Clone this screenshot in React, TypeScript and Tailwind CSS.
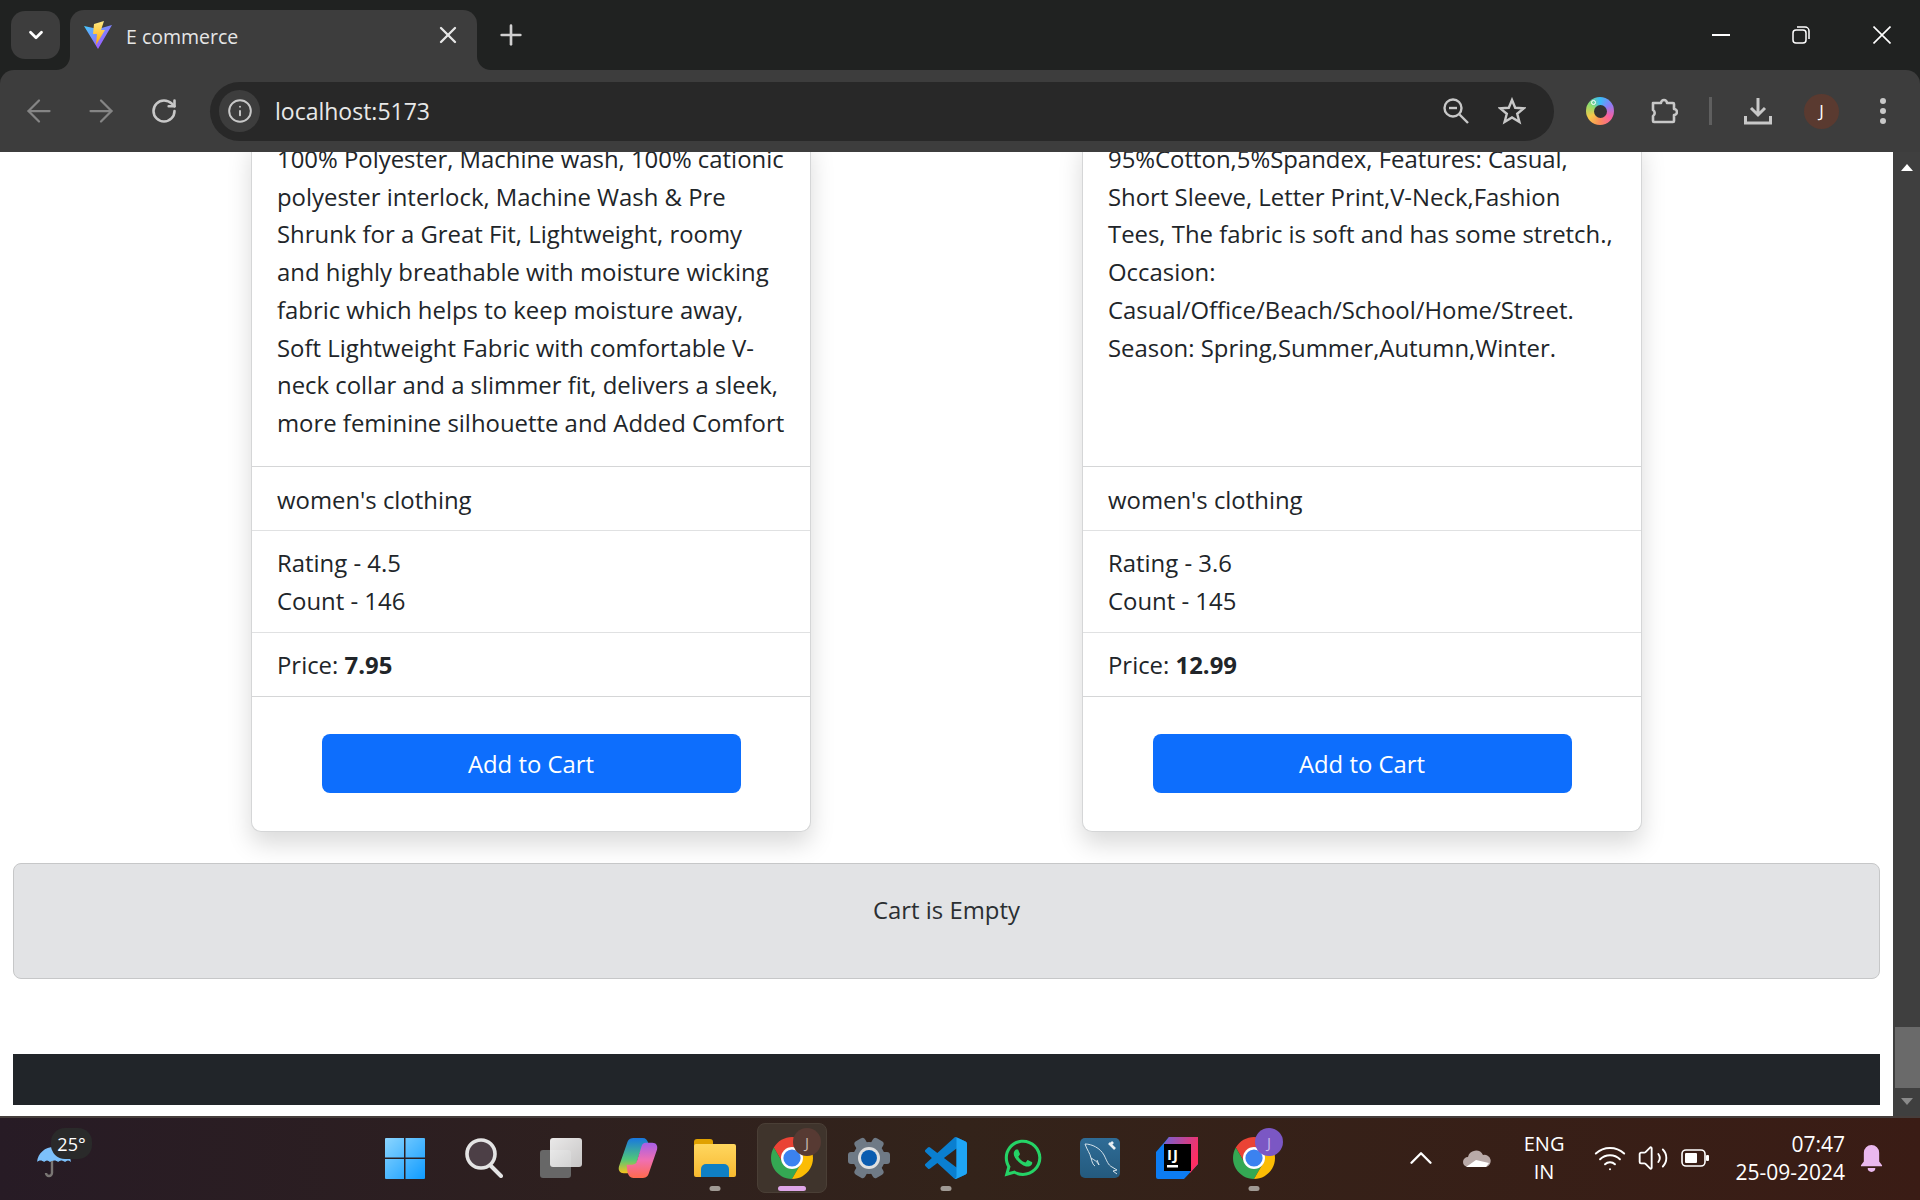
import { ArrowLeft, ArrowRight, ChevronDown, ChevronUp, Info, Plus, RotateCw, Volume2, Wifi, X } from "lucide-react";
import { FaWhatsapp } from "react-icons/fa";

const UI_FONT = "font-['Open_Sans','Noto_Sans',sans-serif]";

function ViteLogo() {
  return (
    <svg width="28" height="28" viewBox="0 0 28 28" className="flex-none">
      <defs>
        <linearGradient id="vite-a" x1="0" y1="0" x2="1" y2="1">
          <stop offset="0" stopColor="#41d1ff" />
          <stop offset="1" stopColor="#bd34fe" />
        </linearGradient>
        <linearGradient id="vite-b" x1="0" y1="0" x2="0" y2="1">
          <stop offset="0" stopColor="#ffea83" />
          <stop offset="1" stopColor="#ffa800" />
        </linearGradient>
      </defs>
      <path d="M0 5 L14 8 L28 4 L14 28 Z" fill="url(#vite-a)" />
      <path d="M10 3 L20 0 L17 9 L21 9 L12 24 L13 13 L9 13 Z" fill="url(#vite-b)" />
    </svg>
  );
}

function ChromeIcon() {
  return (
    <svg width="42" height="42" viewBox="4 4 40 40">
      <path d="M6.680 14A20 20 0 0 1 41.320 14H24A10 10 0 0 0 15.340 29Z" fill="#ea4335" />
      <path d="M24 44A20 20 0 0 1 6.680 14L15.340 29A10 10 0 0 0 32.660 29Z" fill="#34a853" />
      <path d="M41.320 14A20 20 0 0 1 24 44L32.660 29A10 10 0 0 0 24 14Z" fill="#fbbc04" />
      <circle cx="24" cy="24" r="10.500" fill="#fff" />
      <circle cx="24" cy="24" r="8.200" fill="#3b82f0" />
    </svg>
  );
}

function ProfileBubble({ color, text }: { color: string; text: string }) {
  return (
    <span className={`absolute -top-[9px] left-[22px] flex h-[28px] w-[28px] items-center justify-center rounded-full text-[15px] ${color} ${text} ${UI_FONT}`}>
      J
    </span>
  );
}

function TabStrip() {
  return (
    <div className="flex h-[70px] flex-none items-end bg-[#202221] pl-[11px] text-white">
      <div className="mb-[11px] flex h-[48px] w-[49px] items-center justify-center rounded-[14px] bg-[#3d3d3d]">
        <ChevronDown size={22} strokeWidth={3} />
      </div>
      <div className="relative ml-[10px] flex h-[60px] w-[407px] items-start rounded-t-[14px] bg-[#3d3d3d] pt-[11px] pl-[14px]">
        <ViteLogo />
        <span className={`ml-[14px] mt-[1px] text-[19.5px] text-[#e6e6e6] ${UI_FONT}`}>E commerce</span>
        <X size={28} strokeWidth={2} className="ml-auto mr-[15px] text-[#e6e6e6]" />
        <span className="absolute bottom-0 -right-[14px] h-[14px] w-[14px] bg-[#3d3d3d]">
          <span className="block h-full w-full rounded-bl-[14px] bg-[#202221]" />
        </span>
        <span className="absolute bottom-0 -left-[14px] h-[14px] w-[14px] bg-[#3d3d3d]">
          <span className="block h-full w-full rounded-br-[14px] bg-[#202221]" />
        </span>
      </div>
      <Plus size={32} strokeWidth={2} className="mb-[19px] ml-[18px] text-[#d0d0d0]" />
      <div className="mb-[26px] ml-auto flex items-center">
        <span className="mr-[62px] h-[2px] w-[18px] bg-white" />
        <svg width="18" height="18" viewBox="0 0 18 18" fill="none" stroke="#fff" strokeWidth="1.500" className="mr-[63px]">
          <rect x="1" y="4" width="13" height="13" rx="3" />
          <path d="M5 1h8a4 4 0 0 1 4 4v8" />
        </svg>
        <svg width="18" height="18" viewBox="0 0 18 18" stroke="#fff" strokeWidth="1.600" className="mr-[29px]">
          <path d="M0.500 0.500l17 17M17.500 0.500l-17 17" />
        </svg>
      </div>
    </div>
  );
}

function Toolbar() {
  return (
    <div className="flex h-[82px] flex-none items-center rounded-t-[14px] bg-[#3d3d3d] pl-[21px] text-[#c8c8c8]">
      <ArrowLeft size={36} strokeWidth={1.5} className="flex-none text-[#858585]" />
      <ArrowRight size={36} strokeWidth={1.5} className="ml-[26px] flex-none text-[#858585]" />
      <RotateCw size={28} strokeWidth={2.2} className="ml-[31px] flex-none" />
      <div className="ml-[32px] flex h-[59px] w-[1344px] flex-none items-center rounded-full bg-[#282828] pl-[9px]">
        <span className="flex h-[42px] w-[41px] flex-none items-center justify-center rounded-full bg-[#3d3d3d]">
          <Info size={26} strokeWidth={1.8} />
        </span>
        <span className={`ml-[15px] text-[23px] text-[#e8e8e8] ${UI_FONT}`}>localhost:5173</span>
        <svg width="26" height="26" viewBox="0 0 26 26" fill="none" stroke="#c8c8c8" strokeWidth="2.400" className="ml-auto">
          <circle cx="10" cy="10" r="8.500" />
          <path d="M16.500 16.500L25 25" />
          <path d="M6 10h8" />
        </svg>
        <svg width="28" height="28" viewBox="0 0 28 28" fill="none" stroke="#c8c8c8" strokeWidth="2.400" className="ml-[29px] mr-[28px]">
          <polygon points="14,3 17.200,10.800 25.800,11.300 19.200,16.800 21.400,25 14,20.500 6.600,25 8.800,16.800 2.200,11.300 10.800,10.800" />
        </svg>
      </div>
      <span className="relative ml-[32px] flex h-[28px] w-[28px] flex-none items-center justify-center rounded-full bg-[conic-gradient(#38bdf8,#8b7cf6,#f95fa0,#fb8a5a,#f6c84a,#8fdc6a,#38bdf8)]">
        <span className="h-[13px] w-[13px] rounded-full bg-[#333333]" />
        <span className="absolute left-[5px] top-[3px] h-[5px] w-[5px] rounded-full border border-white" />
      </span>
      <svg width="28" height="28" viewBox="0 0 28 28" fill="none" stroke="#c8c8c8" strokeWidth="2.600" className="ml-[36px] flex-none">
        <path d="M3 6h8a3 3 0 0 1 6 0h6a1 1 0 0 1 1 1v5a3 3 0 0 1 0 6v6a1 1 0 0 1-1 1H4a1 1 0 0 1-1-1v-5a3.500 3.500 0 0 0 0-6z" strokeLinejoin="round" />
      </svg>
      <span className="ml-[31px] h-[28px] w-[3px] flex-none bg-[#5f5f5f]" />
      <svg width="28" height="28" viewBox="0 0 28 28" fill="none" stroke="#c8c8c8" strokeWidth="3" className="ml-[32px] flex-none">
        <path d="M14 1v17M7 11l7 7 7-7M1.500 19v7h25v-7" />
      </svg>
      <span className={`ml-[32px] flex h-[35px] w-[35px] flex-none items-center justify-center rounded-full bg-[#5a3a30] text-[17px] text-white ${UI_FONT}`}>J</span>
      <span className="ml-[41px] flex flex-none flex-col gap-[4px]">
        <i className="h-[6px] w-[6px] rounded-full bg-[#c8c8c8]" />
        <i className="h-[6px] w-[6px] rounded-full bg-[#c8c8c8]" />
        <i className="h-[6px] w-[6px] rounded-full bg-[#c8c8c8]" />
      </span>
    </div>
  );
}

type Product = {
  lines: string[];
  rating: string;
  count: string;
  price: string;
};

const products: Product[] = [
  {
    lines: [
      "100% Polyester, Machine wash, 100% cationic",
      "polyester interlock, Machine Wash & Pre",
      "Shrunk for a Great Fit, Lightweight, roomy",
      "and highly breathable with moisture wicking",
      "fabric which helps to keep moisture away,",
      "Soft Lightweight Fabric with comfortable V-",
      "neck collar and a slimmer fit, delivers a sleek,",
      "more feminine silhouette and Added Comfort",
    ],
    rating: "4.5",
    count: "146",
    price: "7.95",
  },
  {
    lines: [
      "95%Cotton,5%Spandex, Features: Casual,",
      "Short Sleeve, Letter Print,V-Neck,Fashion",
      "Tees, The fabric is soft and has some stretch.,",
      "Occasion:",
      "Casual/Office/Beach/School/Home/Street.",
      "Season: Spring,Summer,Autumn,Winter.",
    ],
    rating: "3.6",
    count: "145",
    price: "12.99",
  },
];

function ProductCard({ product }: { product: Product }) {
  return (
    <div className="w-[560px] flex-none rounded-b-[10px] border border-t-0 border-[#d5d6d7] bg-white shadow-[0_12px_25px_rgba(0,0,0,0.15)]">
      <div className="h-[327px] px-[25px] pt-[1px]">
        {product.lines.map((line) => (
          <div key={line} className="whitespace-nowrap">{line}</div>
        ))}
      </div>
      <div className="h-[64px] border-t border-[#d5d6d7] px-[25px] pt-[14px]">women's clothing</div>
      <div className="h-[102px] border-t border-[#e0e1e2] px-[25px] pt-[13px]">
        <div>Rating - {product.rating}</div>
        <div>Count - {product.count}</div>
      </div>
      <div className="h-[64px] border-t border-[#e0e1e2] px-[25px] pt-[13px]">
        Price: <b>{product.price}</b>
      </div>
      <div className="flex h-[135px] justify-center border-t border-[#d5d6d7] pt-[37px]">
        <button className="h-[59px] w-[419px] rounded-[8px] bg-[#0d6efd] text-white">Add to Cart</button>
      </div>
    </div>
  );
}

function PageContent() {
  return (
    <div className={`flex min-w-0 flex-1 flex-col overflow-hidden bg-white px-[13px] text-[23.9px] leading-[37.7px] text-[#212529] ${UI_FONT}`}>
      <div className="-mt-[13px] flex flex-none gap-[271px] pl-[238px]">
        {products.map((product) => (
          <ProductCard key={product.price} product={product} />
        ))}
      </div>
      <div className="mt-[31px] h-[116px] flex-none rounded-[8px] border border-[#c6c7c8] bg-[#e2e3e5] pt-[27px] text-center text-[#2b2f32]">
        Cart is Empty
      </div>
      <div className="mt-[75px] h-[51px] flex-none bg-[#212529]" />
    </div>
  );
}

function Scrollbar() {
  return (
    <div className="flex w-[27px] flex-none flex-col items-center bg-[#3f3f3f]">
      <span className="mt-[12px] h-0 w-0 border-x-[6px] border-b-[7px] border-x-transparent border-b-white" />
      <span className="mt-[856px] ml-[2px] h-[61px] w-[25px] flex-none bg-[#6a6a6a]" />
      <span className="mt-[10px] h-0 w-0 border-x-[6px] border-t-[7px] border-x-transparent border-t-[#8a8a8a]" />
    </div>
  );
}

function Dot() {
  return <span className="absolute -bottom-[12px] left-1/2 h-[5px] w-[11px] -translate-x-1/2 rounded-full bg-[#a09a94]" />;
}

function Gear() {
  return (
    <svg width="42" height="42" viewBox="0 0 42 42" className="ml-[21px] flex-none">
      <circle cx="21" cy="21" r="16" fill="#6f7a86" />
      {[0, 60, 120, 180, 240, 300].map((angle) => (
        <rect key={angle} x="15" y="0" width="12" height="10" rx="3" fill="#6f7a86" transform={`rotate(${angle + 30} 21 21)`} />
      ))}
      <circle cx="21" cy="21" r="11" fill="#e0e0e0" />
      <circle cx="21" cy="21" r="8" fill="#0a5cb0" />
    </svg>
  );
}

function Taskbar() {
  return (
    <div className="flex h-[84px] flex-none items-center border-t-2 border-[#463e3c] bg-gradient-to-r from-[#271b25] via-[#33231a] to-[#3a1c15] pb-[2px] text-white">
      <div className={`relative -mt-[10px] ml-[37px] h-[50px] w-[55px] flex-none ${UI_FONT}`}>
        <svg width="34" height="31" viewBox="0 0 34 31" className="absolute bottom-0 left-0">
          <path d="M0 15C1 6 8 0 17 0s16 6 17 15c-2-2-4-2-6 0-3-2-5-2-7 0-2-2-5-2-8 0-2-2-4-2-6 0-2-2-5-2-7 0z" fill="#7cc0fb" />
          <path d="M15 14v12a3 3 0 0 1-6 0" fill="none" stroke="#7a7674" strokeWidth="2.400" />
        </svg>
        <span className="absolute right-0 top-0 flex h-[31px] w-[41px] items-center justify-center rounded-[14px] bg-[#2a2a2a] text-[18px] leading-none">25°</span>
      </div>

      <svg width="40" height="41" viewBox="0 0 40 41" className="ml-[293px] flex-none">
        <defs>
          <linearGradient id="win" x1="0" y1="0" x2="1" y2="1">
            <stop offset="0" stopColor="#8bd5ff" />
            <stop offset="1" stopColor="#0f9bff" />
          </linearGradient>
        </defs>
        <path d="M0 1a1 1 0 0 1 1-1h18v19.500H0zM20.500 0H39a1 1 0 0 1 1 1v18.500H20.500zM0 21h19v20H1a1 1 0 0 1-1-1zM20.500 21H40v19a1 1 0 0 1-1 1H20.500z" fill="url(#win)" />
      </svg>
      <svg width="38" height="40" viewBox="0 0 38 40" fill="none" className="ml-[40px] flex-none">
        <circle cx="16" cy="16" r="14" fill="#4c3f46" stroke="#e4e4e4" strokeWidth="3.600" />
        <path d="M26 28l10 10" stroke="#e4e4e4" strokeWidth="4" strokeLinecap="round" />
      </svg>
      <div className="relative ml-[37px] h-[40px] w-[42px] flex-none">
        <span className="absolute bottom-0 left-0 h-[28px] w-[31px] rounded-[3px] bg-[#676767]" />
        <span className="absolute right-0 top-0 h-[29px] w-[32px] rounded-[3px] bg-gradient-to-br from-white to-[#d8d8d8] opacity-90" />
      </div>
      <svg width="42" height="40" viewBox="0 0 42 42" className="ml-[35px] flex-none">
        <defs>
          <linearGradient id="cop-a" x1="0" y1="0" x2="0" y2="1">
            <stop offset="0" stopColor="#1877e0" />
            <stop offset="0.6" stopColor="#4fc67a" />
            <stop offset="1" stopColor="#f6c21d" />
          </linearGradient>
          <linearGradient id="cop-b" x1="0" y1="0" x2="0" y2="1">
            <stop offset="0" stopColor="#ff6a4d" />
            <stop offset="0.5" stopColor="#f06fb0" />
            <stop offset="1" stopColor="#a65fe8" />
          </linearGradient>
        </defs>
        <path d="M10 4C11 1 14 0 16 0H26C29 0 31 2 32 6L33 14H27C24 14 23 15 22 18L17 34C16 36 15 37 13 37H6C2 37 0 34 1 30Z" fill="url(#cop-a)" />
        <path d="M10 4C11 1 14 0 16 0H26C29 0 31 2 32 6L33 14H27C24 14 23 15 22 18L17 34C16 36 15 37 13 37H6C2 37 0 34 1 30Z" fill="url(#cop-b)" transform="rotate(180 21 21)" />
      </svg>
      <div className="relative ml-[35px] h-[42px] w-[42px] flex-none">
        <span className="absolute left-0 top-[2px] h-[12px] w-[19px] rounded-t-[3px] bg-[#e0a100]" />
        <span className="absolute bottom-[2px] left-0 h-[33px] w-full rounded-[2px] bg-gradient-to-b from-[#ffd75e] to-[#f7b92d]" />
        <span className="absolute bottom-[2px] left-[7px] h-[13px] w-[28px] rounded-t-[5px] bg-[#0f7fc4]" />
        <Dot />
      </div>
      <div className="relative ml-[21px] flex h-[70px] w-[70px] flex-none items-center justify-center rounded-[8px] border border-[#4a3f36] bg-[#3f342c]">
        <div className="relative h-[42px] w-[42px]">
          <ChromeIcon />
          <ProfileBubble color="bg-[#573a33]" text="text-[#c7b6ae]" />
        </div>
        <span className="absolute bottom-[1px] h-[5px] w-[28px] rounded-full bg-[#dea6e8]" />
      </div>
      <Gear />
      <div className="relative ml-[35px] h-[42px] w-[42px] flex-none">
        <svg width="42" height="42" viewBox="0 0 100 100">
          <path fillRule="evenodd" d="M70.900 99.300a6.200 6.200 0 0 0 5-.2L96.500 89.200A6.250 6.250 0 0 0 100 83.600V16.400a6.250 6.250 0 0 0-3.500-5.600L75.900.9a6.200 6.200 0 0 0-7.100 1.200L29.400 38 12.200 25a4.170 4.170 0 0 0-5.300.2L1.400 30.200a4.170 4.170 0 0 0 0 6.200L16.300 50 1.400 63.600a4.170 4.170 0 0 0 0 6.200l5.500 5a4.170 4.170 0 0 0 5.300.2L29.400 62 68.800 98a6.200 6.200 0 0 0 2.100 1.300ZM75 27.300 45.100 50 75 72.700Z" fill="#0a7fd0" />
          <path d="M75 .3a6 6 0 0 1 1 .6L96.500 10.800A6.250 6.250 0 0 1 100 16.400V83.600a6.250 6.250 0 0 1-3.500 5.600L76 99a6 6 0 0 1-5 .3A6 6 0 0 0 75 94Z" fill="#1fa5f5" />
        </svg>
        <Dot />
      </div>
      <FaWhatsapp size={42} className="ml-[35px] flex-none text-[#25d366]" />
      <svg width="40" height="40" viewBox="0 0 40 40" fill="none" className="ml-[36px] flex-none">
        <defs>
          <linearGradient id="sql" x1="0" y1="0" x2="0" y2="1">
            <stop offset="0" stopColor="#2f6c96" />
            <stop offset="1" stopColor="#245a7e" />
          </linearGradient>
        </defs>
        <rect width="40" height="40" rx="5" fill="url(#sql)" />
        <path d="M5 6C12 6 20 10 24 17C27 23 28 27 32 29L37 32L33 33L37 36M5 6C7 12 10 15 11 20C12 24 13 27 15 28M11 20C14 22 17 23 19 27L17 22" stroke="#d5e2ea" strokeWidth="1" />
        <path d="M29 5l6 6" stroke="#e8eef2" strokeWidth="2.600" />
        <path d="M33 4l-3 3" stroke="#e8eef2" strokeWidth="2.600" />
      </svg>
      <div className="relative ml-[36px] h-[42px] w-[42px] flex-none">
        <svg width="42" height="42" viewBox="0 0 42 42">
          <defs>
            <linearGradient id="ij" x1="0" y1="0" x2="1" y2="0.400">
              <stop offset="0" stopColor="#6f63d8" />
              <stop offset="1" stopColor="#ff2d62" />
            </linearGradient>
          </defs>
          <path d="M0 15L13 0H42V27L28 42H2A2 2 0 0 1 0 40Z" fill="#0c7cf2" />
          <path d="M13 0H42V27L34 36V8H7Z" fill="url(#ij)" />
          <rect x="8" y="7" width="27" height="27" fill="#000" />
          <rect x="11" y="28" width="11" height="2.500" fill="#fff" />
        </svg>
        <span className={`absolute left-[11px] top-[10px] text-[15px] font-bold leading-none tracking-[1px] text-white ${UI_FONT}`}>IJ</span>
      </div>
      <div className="relative ml-[35px] h-[42px] w-[42px] flex-none">
        <ChromeIcon />
        <ProfileBubble color="bg-[#7b57c4]" text="text-[#c9b8ea]" />
        <Dot />
      </div>

      <div className={`ml-auto flex items-center text-[20px] leading-[28px] ${UI_FONT}`}>
        <ChevronUp size={38} strokeWidth={1.500} />
        <svg width="28" height="18" viewBox="0 0 28 18" className="ml-[23px]">
          <path d="M5 18a5 5 0 0 1 0-10 8 8 0 0 1 15-2 6 6 0 0 1 3 12z" fill="#b9aaa8" />
          <path d="M3 18l10-7 13 3 -3 4z" fill="#fff" />
        </svg>
        <div className="ml-[33px] text-center">
          <div>ENG</div>
          <div>IN</div>
        </div>
        <Wifi size={34} strokeWidth={1.400} className="ml-[29px]" />
        <Volume2 size={32} strokeWidth={1.400} className="ml-[10px]" />
        <svg width="28" height="18" viewBox="0 0 28 18" fill="none" className="ml-[12px]">
          <rect x="1" y="1" width="23" height="16" rx="4" stroke="#fff" strokeWidth="1.600" />
          <rect x="4" y="4" width="12" height="10" rx="1" fill="#fff" />
          <rect x="25" y="6" width="3" height="6" rx="1" fill="#fff" />
        </svg>
        <div className="ml-[26px] text-right text-[21px]">
          <div>07:47</div>
          <div>25-09-2024</div>
        </div>
        <svg width="23" height="27" viewBox="0 0 24 28" className="ml-[15px] mr-[37px]">
          <path d="M12 0a8 8 0 0 1 8 8v9l3 4v1H1v-1l3-4V8a8 8 0 0 1 8-8z" fill="#eab8ee" />
          <path d="M8 24h8a4 4 0 0 1-8 0z" fill="#eab8ee" />
        </svg>
      </div>
    </div>
  );
}

export default function App() {
  return (
    <div className="flex h-[1200px] w-[1920px] flex-col overflow-hidden bg-[#202221]">
      <TabStrip />
      <Toolbar />
      <div className="flex min-h-0 flex-1">
        <PageContent />
        <Scrollbar />
      </div>
      <Taskbar />
    </div>
  );
}
